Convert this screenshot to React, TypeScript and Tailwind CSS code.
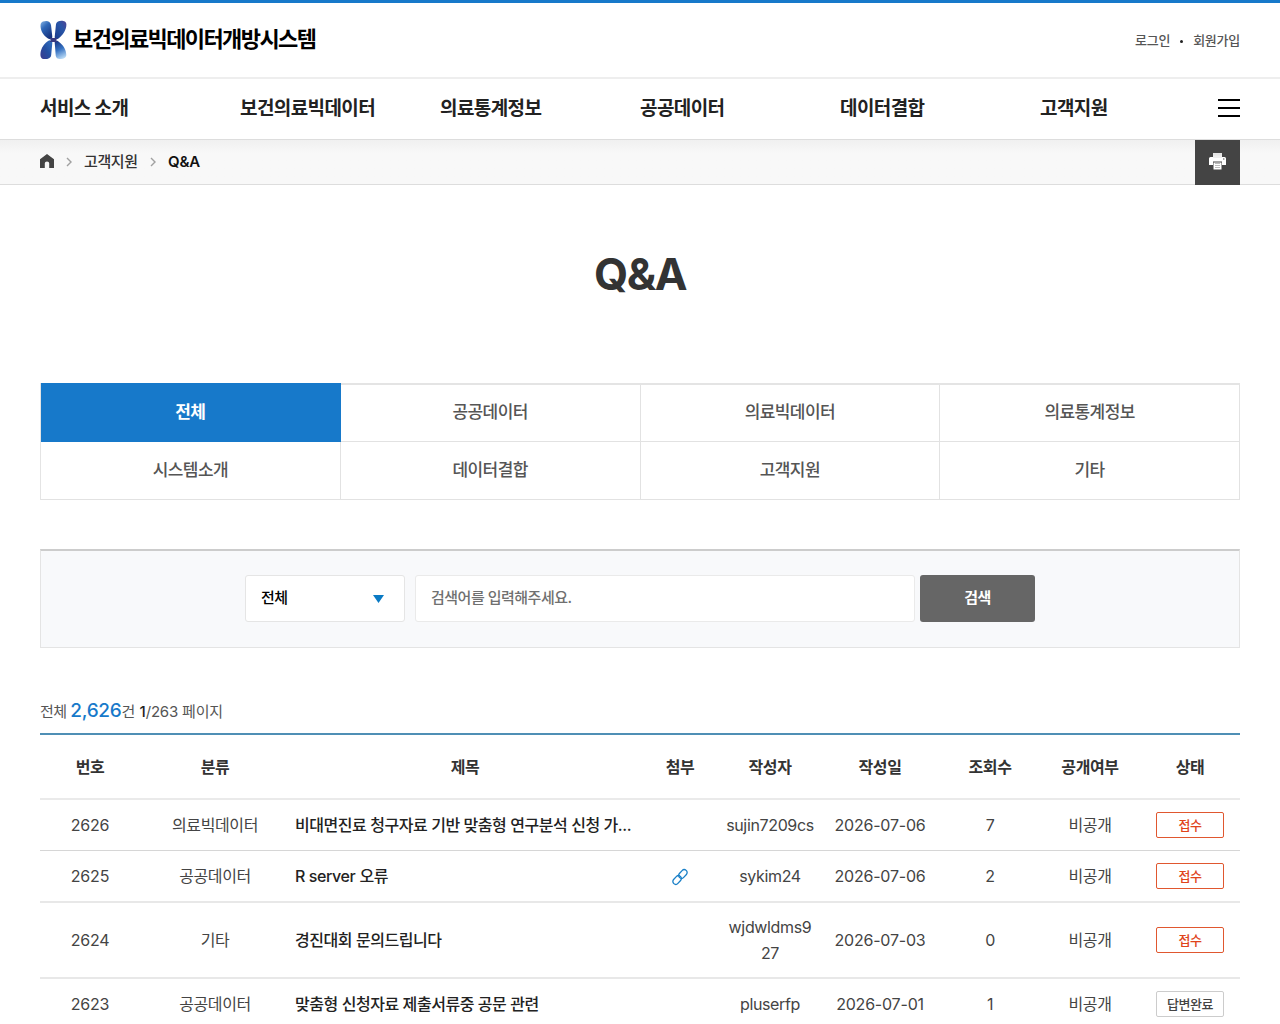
import clsx from "clsx";

type Row = {
  no: string;
  category: string;
  title: string;
  latin?: string;
  file?: boolean;
  writer: string;
  date: string;
  views: string;
  done?: boolean;
  line: string;
};

const menus = ["서비스 소개", "보건의료빅데이터", "의료통계정보", "공공데이터", "데이터결합", "고객지원"];

const tabs = ["전체", "공공데이터", "의료빅데이터", "의료통계정보", "시스템소개", "데이터결합", "고객지원", "기타"];

const heads = ["번호", "분류", "제목", "첨부", "작성자", "작성일", "조회수", "공개여부", "상태"];

const rows: Row[] = [
  { no: "2626", category: "의료빅데이터", title: "비대면진료 청구자료 기반 맞춤형 연구분석 신청 가...", writer: "sujin7209cs", date: "2026-07-06", views: "7", line: "h-[51px] border-b border-[#d6d6d6]" },
  { no: "2625", category: "공공데이터", latin: "R server", title: "오류", file: true, writer: "sykim24", date: "2026-07-06", views: "2", line: "h-[52px] border-b-2 border-[#e8e8e8]" },
  { no: "2624", category: "기타", title: "경진대회 문의드립니다", writer: "wjdwldms927", date: "2026-07-03", views: "0", line: "h-[76px] border-b-2 border-[#e8e8e8]" },
  { no: "2623", category: "공공데이터", title: "맞춤형 신청자료 제출서류중 공문 관련", writer: "pluserfp", date: "2026-07-01", views: "1", done: true, line: "h-[51px] border-b border-[#d6d6d6]" },
];

const columns = "grid grid-cols-[100px_150px_350px_80px_100px_120px_100px_100px_100px] items-center text-center";

function Logo() {
  return (
    <svg width="27" height="40" viewBox="0 0 27 40">
      <defs>
        <linearGradient id="light" x1="0" y1="0" x2="0.6" y2="1">
          <stop offset="0" stopColor="#86b4e4" />
          <stop offset="0.4" stopColor="#2f68b8" />
          <stop offset="1" stopColor="#17337f" />
        </linearGradient>
        <linearGradient id="dark" x1="1" y1="0" x2="0" y2="1">
          <stop offset="0" stopColor="#4f4494" />
          <stop offset="0.4" stopColor="#2856a8" />
          <stop offset="1" stopColor="#1b3a8a" />
        </linearGradient>
        <linearGradient id="deep" x1="1" y1="0" x2="0" y2="1">
          <stop offset="0" stopColor="#3273c4" />
          <stop offset="0.5" stopColor="#2450a2" />
          <stop offset="1" stopColor="#3c3a8c" />
        </linearGradient>
        <linearGradient id="fade" x1="0.2" y1="0" x2="0.5" y2="1">
          <stop offset="0" stopColor="#193684" />
          <stop offset="0.5" stopColor="#3672c2" />
          <stop offset="1" stopColor="#b4d6f4" />
        </linearGradient>
      </defs>
      <path d="M3 1.500C7 .3 10.300 1 11 5L12.300 16.500C12.500 19.500 10 20 8 18.500C2.500 15 0 9 .6 4.500C.9 3 1.600 2 3 1.500Z" fill="url(#light)" />
      <path d="M18 1.500C21 .2 26.400 .5 26.400 4.500C26.500 10 22.500 15.500 18.500 18.500C16.500 20 14.600 19 14.700 17L15.800 6C16 3.500 16.500 2.200 18 1.500Z" fill="url(#dark)" />
      <path d="M8 21C10 19.500 12.500 20.500 12.300 23L11.200 35C10.900 38.500 7 39.500 3.500 39C0 38.500 0 34 1 30.500C2.200 26.500 5 23 8 21Z" fill="url(#deep)" />
      <path d="M14.700 22.500C14.700 20.300 16.500 20 18.500 21.500C23.500 25 26.300 30 26.300 35C26.300 38.500 21.500 39.500 18.500 38.800C16 38.200 15.700 36.500 15.600 34Z" fill="url(#fade)" />
      <path d="M9.500 18H17.500L16 20.200L17.500 22H9.500L11 20.200Z" fill="#3a3b80" />
    </svg>
  );
}

function LinkIcon() {
  return (
    <svg width="18" height="18" viewBox="0 0 18 18" fill="none" stroke="#1a80c8" strokeWidth="1.300">
      <rect x="-4.900" y="-2.900" width="9.800" height="5.800" rx="2.900" transform="translate(6.100 12) rotate(-48)" />
      <rect x="-4.900" y="-2.900" width="9.800" height="5.800" rx="2.900" transform="translate(11.900 6) rotate(-48)" />
    </svg>
  );
}

function Chevron() {
  return (
    <svg width="6" height="10" viewBox="0 0 6 10" fill="none" stroke="#a0a0a0" strokeWidth="1.400">
      <path d="M1 1L5 5L1 9" />
    </svg>
  );
}

function Header() {
  return (
    <header>
      <div className="h-[79px] border-t-[3px] border-b-2 border-t-[#1779ca] border-b-[#eee]">
        <div className="mx-10 flex h-[74px] items-center justify-between">
          <a className="flex items-center gap-[6px]">
            <Logo />
            <span className="pb-0.5 text-[22px] font-bold tracking-[-1.600px] text-black">보건의료빅데이터개방시스템</span>
          </a>
          <div className="flex items-center pt-0.5 text-[13px] font-medium tracking-[-0.250px] text-[#555]">
            <span>로그인</span>
            <span className="mx-[10px] size-[3px] rounded-full bg-[#222]" />
            <span>회원가입</span>
          </div>
        </div>
      </div>
      <nav className="flex h-[61px] items-center justify-between border-b border-[#ddd] px-10">
        <ul className="flex text-[19px] font-bold tracking-[-0.600px] text-[#222]">
          {menus.map((m) => (
            <li key={m} className="w-[200px] whitespace-nowrap last:w-[150px]">{m}</li>
          ))}
        </ul>
        <button className="mb-0.5 flex w-[22px] shrink-0 flex-col gap-[6px]">
          <span className="h-[2px] bg-black" />
          <span className="h-[2px] bg-black" />
          <span className="h-[2px] bg-black" />
        </button>
      </nav>
    </header>
  );
}

function Breadcrumb() {
  return (
    <div className="flex h-[45px] items-center justify-between border-b border-[#ddd] bg-linear-to-b from-[#f0f0f0] to-[#f8f8f8] to-30% px-10">
      <div className="flex items-center text-[15px] tracking-[-0.400px] text-[#333]">
        <svg className="mb-0.5" width="14" height="14" viewBox="0 0 14 14" fill="#444">
          <path d="M7 0L14 5.300V14H9.200V9.300Q9.200 7.500 7 7.500Q4.800 7.500 4.800 9.300V14H0V5.300Z" />
        </svg>
        <span className="mb-px ml-3 flex"><Chevron /></span>
        <span className="ml-[12px] w-[54px] font-medium whitespace-nowrap">고객지원</span>
        <span className="mb-px ml-[12px] flex"><Chevron /></span>
        <span className="ml-[12px] font-semibold tracking-[-0.200px] text-[#111]">Q&amp;A</span>
      </div>
      <button className="flex h-[45px] w-[45px] items-center justify-center self-start bg-[#444]">
        <svg className="mb-0.5" width="17" height="17" viewBox="0 0 17 17">
          <path d="M4 0H13V3H4Z" fill="#e4e4e4" />
          <path d="M1.500 4H15.500Q17 4 17 5.500V12H13V8.500H4V12H0V5.500Q0 4 1.500 4Z" fill="#fff" />
          <path d="M4 2.500H13V5H4Z" fill="#eee" />
          <path d="M4.500 9.500H12.500V16.500H4.500Z" fill="#fff" />
          <path d="M6 10.500H11M6 12.500H11M6 14.500H11" stroke="#bbb" />
          <circle cx="14.800" cy="6" r=".7" fill="#555" />
        </svg>
      </button>
    </div>
  );
}

function SearchBox() {
  return (
    <form className="mt-[49px] flex h-[99px] items-center justify-center border border-t-2 border-[#e4e4e4] border-t-[#ccc] bg-[#f8f9fb] pb-px text-[15px] tracking-[-0.500px]">
      <div className="flex h-[47px] w-[160px] items-center justify-between rounded-[3px] border border-[#e5e5e5] bg-white pr-5 pl-[15px] font-medium text-black">
        전체
        <svg width="11" height="8" viewBox="0 0 11 8" fill="#0a7ac4">
          <path d="M0 0H11L5.500 8Z" />
        </svg>
      </div>
      <input
        className="ml-[10px] h-[47px] w-[500px] rounded-[3px] border border-[#eaeaea] bg-white px-[15px] pb-0.5 placeholder:font-medium placeholder:text-[#707070]"
        placeholder="검색어를 입력해주세요."
      />
      <button className="ml-[5px] h-[47px] w-[115px] rounded-[3px] bg-[#666] font-bold text-white">검색</button>
    </form>
  );
}

export default function App() {
  return (
    <div className="h-[1024px] w-[1280px] overflow-hidden bg-white font-['Inter','Noto_Sans_CJK_KR',sans-serif]">
      <Header />
      <Breadcrumb />
      <main className="px-10">
        <h1 className="mt-[59px] text-center text-[44px] leading-[60px] font-bold tracking-[-1.500px] text-[#333]">Q&amp;A</h1>

        <ul className="mt-[79px] grid grid-cols-4 grid-rows-[57px_58px] border-t-2 border-b-0 border-l border-[#e4e4e4] text-[17px] font-medium tracking-[-0.600px] text-[#555]">
          {tabs.map((t, i) => (
            <li
              key={t}
              className={clsx(
                "flex items-center justify-center border-r border-b",
                i === 0 ? "-mt-[2px] border-[#1779ca] bg-[#1779ca] pt-px font-bold text-white" : "border-[#e2e2e2]"
              )}
            >
              {t}
            </li>
          ))}
        </ul>

        <SearchBox />

        <p className="mt-[49px] flex h-[36px] items-baseline text-[15px] leading-[28px] whitespace-pre text-[#555]">
          <span className="tracking-[-0.500px]">전체 </span>
          <span className="text-[19px] font-medium tracking-[-0.300px] text-[#1779ca]">2,626</span>
          <span>건 </span>
          <span className="font-medium text-[#222]">1</span>
          <span className="tracking-[-0.200px]">/263 </span>
          <span className="tracking-[-0.200px]">페이지</span>
        </p>

        <div className="border-t-2 border-[#4f8fb5] text-[16px] leading-[26px] tracking-[-0.400px] text-[#444]">
          <div className={clsx(columns, "h-[65px] border-b-2 border-[#eaeaea] font-bold text-[#333]")}>
            {heads.map((h) => (
              <span key={h}>{h}</span>
            ))}
          </div>
          {rows.map((r) => (
            <div key={r.no} className={clsx(columns, r.line)}>
              <span className="tracking-[-0.200px]">{r.no}</span>
              <span>{r.category}</span>
              <span className="pl-[5px] text-left font-medium tracking-[-0.440px] whitespace-nowrap text-[#222]">
                {r.latin && <span className="mr-1 tracking-[-0.400px]">{r.latin}</span>}
                {r.title}
              </span>
              <span className="flex justify-center pt-px">{r.file && <LinkIcon />}</span>
              <span className="px-[5px] tracking-[-0.350px] break-all">{r.writer}</span>
              <span className="tracking-[-0.200px]">{r.date}</span>
              <span>{r.views}</span>
              <span>비공개</span>
              <span className="flex justify-center">
                <span
                  className={clsx(
                    "flex h-[26px] w-[68px] items-center justify-center rounded-[2px] border text-[13px] font-medium",
                    r.done ? "border-[#ccc] text-[#444]" : "border-[#e0572f] text-[#e0441b]"
                  )}
                >
                  {r.done ? "답변완료" : "접수"}
                </span>
              </span>
            </div>
          ))}
        </div>
      </main>
    </div>
  );
}
